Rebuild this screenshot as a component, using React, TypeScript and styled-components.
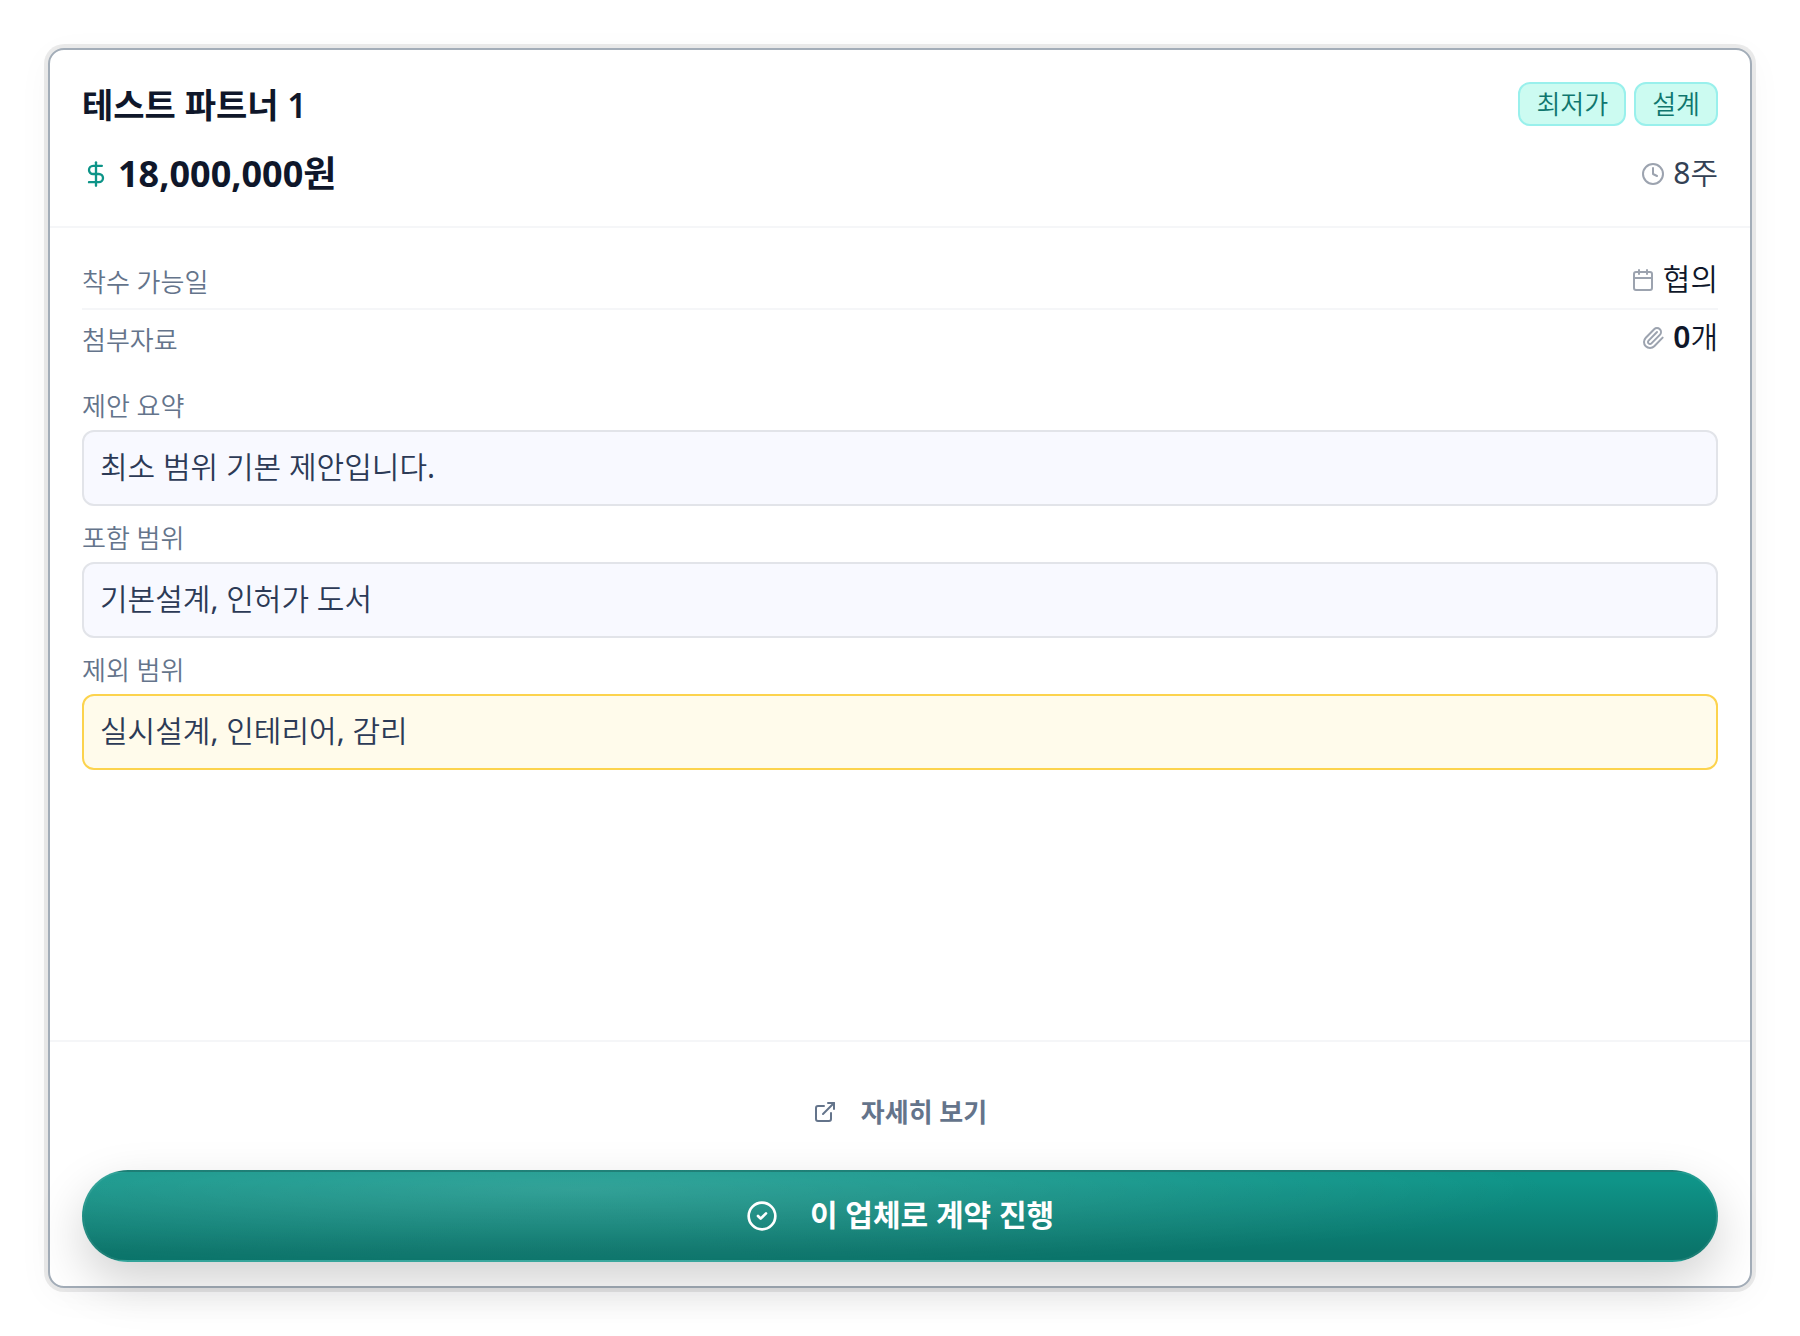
import React from "react";
import styled, { createGlobalStyle } from "styled-components";
import { Calendar, CircleCheck, Clock, DollarSign, ExternalLink, Paperclip } from "lucide-react";

const lightHangul = `"Noto Sans", "Noto Sans CJK KR DemiLight", "Noto Sans CJK KR", sans-serif`;

const GlobalStyle = createGlobalStyle`
  *, *::before, *::after { box-sizing: border-box; }
  body {
    margin: 0;
    background: #ffffff;
    font-family: "Noto Sans", "Noto Sans CJK KR", sans-serif;
    color: #0f172a;
  }
`;

const Page = styled.main`
  display: flex;
  min-height: 100vh;
  padding: 48px;
`;

const Card = styled.article`
  display: flex;
  flex: 1;
  flex-direction: column;
  min-width: 0;
  border: 2px solid #a3adb8;
  border-radius: 16px;
  background: #ffffff;
  box-shadow: 0 0 0 4px rgba(0, 0, 0, 0.08), 0 8px 36px rgba(15, 23, 42, 0.04);
`;

const Header = styled.header`
  display: flex;
  flex-direction: column;
  gap: 24px;
  padding: 32px 32px 28px;
  border-bottom: 2px solid #f5f6f8;
`;

const Line = styled.div`
  display: flex;
  align-items: center;
  justify-content: space-between;
  gap: 16px;
`;

const Title = styled.h2`
  margin: 0;
  padding-top: 2px;
  font-size: 34px;
  font-weight: 600;
  line-height: 42px;
`;

const Badges = styled.div`
  display: flex;
  gap: 8px;
`;

const Badge = styled.span`
  padding: 0 16px;
  border: 2px solid #99f0ec;
  border-radius: 12px;
  background: #ccfbf1;
  color: #0f766e;
  font-size: 26px;
  font-weight: 350;
  line-height: 40px;
`;

const Price = styled.strong`
  display: flex;
  align-items: center;
  gap: 8px;
  font-size: 36px;
  font-weight: 700;
  line-height: 48px;
  svg { color: #0d9488; }
`;

const Text = styled.span`
  padding-bottom: 2px;
`;

const Value = styled.span<{ $muted?: boolean }>`
  display: flex;
  align-items: center;
  gap: 8px;
  height: 48px;
  color: ${(p) => (p.$muted ? "#334155" : "#0f172a")};
  font-family: ${lightHangul};
  font-size: 30px;
  font-weight: 400;
  line-height: 44px;
  svg { color: #9ca3af; }
  b { font-weight: 600; }
`;

const Body = styled.div`
  display: flex;
  flex: 1;
  flex-direction: column;
  gap: 24px;
  padding: 24px 32px;
`;

const Facts = styled.dl`
  margin: 0;
`;

const Fact = styled.div`
  display: flex;
  align-items: flex-end;
  justify-content: space-between;
  padding: 4px 0;
  & + & { border-top: 2px solid #f5f6f8; }
  dd { margin: 0; }
`;

const FactName = styled.dt`
  color: #64748b;
  font-size: 26px;
  font-weight: 350;
  line-height: 44px;
`;

const Sections = styled.div`
  display: flex;
  flex-direction: column;
  gap: 16px;
`;

const Section = styled.section`
  display: flex;
  flex-direction: column;
  gap: 8px;
`;

const SectionName = styled.h3`
  margin: 0;
  color: #64748b;
  font-size: 26px;
  font-weight: 350;
  line-height: 32px;
`;

const Note = styled.p<{ $warning?: boolean }>`
  margin: 0;
  padding: 12px 16px 14px;
  border: 2px solid ${(p) => (p.$warning ? "#fcd34d" : "#e2e4e9")};
  border-radius: 12px;
  background: ${(p) => (p.$warning ? "#fffbeb" : "#f8f9ff")};
  color: #2c3a56;
  font-family: ${lightHangul};
  font-size: 30px;
  font-weight: 400;
  line-height: 46px;
`;

const Footer = styled.footer`
  display: flex;
  flex-direction: column;
  gap: 12px;
  padding: 24px 32px;
  border-top: 2px solid #f5f6f8;
`;

const Button = styled.button`
  display: flex;
  align-items: center;
  justify-content: center;
  height: 92px;
  border: 2px solid transparent;
  border-radius: 46px;
  background: transparent;
  font-family: inherit;
  font-weight: 700;
  cursor: pointer;
`;

const DetailButton = styled(Button)`
  gap: 24px;
  color: #64748b;
  font-size: 26px;
`;

const ContractButton = styled(Button)`
  gap: 32px;
  border-color: rgba(255, 255, 255, 0.08);
  background:
    radial-gradient(60% 90% at 30% 20%, rgba(255, 255, 255, 0.15), rgba(255, 255, 255, 0)),
    linear-gradient(180deg, #0f9488 10%, #0a746a 90%);
  box-shadow: 0 20px 50px rgba(0, 0, 0, 0.18);
  color: #ffffff;
  font-size: 30px;

  ${Text} { padding-bottom: 6px; }
`;

const sections = [
  { name: "제안 요약", text: "최소 범위 기본 제안입니다." },
  { name: "포함 범위", text: "기본설계, 인허가 도서" },
  { name: "제외 범위", text: "실시설계, 인테리어, 감리", warning: true },
];

export default function App() {
  return (
    <Page>
      <GlobalStyle />
      <Card>
        <Header>
          <Line>
            <Title>테스트 파트너 1</Title>
            <Badges>
              <Badge>최저가</Badge>
              <Badge>설계</Badge>
            </Badges>
          </Line>
          <Line>
            <Price>
              <DollarSign size={28} />
              18,000,000원
            </Price>
            <Value $muted>
              <Clock size={24} />
              <Text>8주</Text>
            </Value>
          </Line>
        </Header>
        <Body>
          <Facts>
            <Fact>
              <FactName>착수 가능일</FactName>
              <dd>
                <Value>
                  <Calendar size={24} />
                  <Text>협의</Text>
                </Value>
              </dd>
            </Fact>
            <Fact>
              <FactName>첨부자료</FactName>
              <dd>
                <Value>
                  <Paperclip size={24} />
                  <Text>
                    <b>0</b>개
                  </Text>
                </Value>
              </dd>
            </Fact>
          </Facts>
          <Sections>
            {sections.map((s) => (
              <Section key={s.name}>
                <SectionName>{s.name}</SectionName>
                <Note $warning={s.warning}>{s.text}</Note>
              </Section>
            ))}
          </Sections>
        </Body>
        <Footer>
          <DetailButton type="button">
            <ExternalLink size={24} />
            <Text>자세히 보기</Text>
          </DetailButton>
          <ContractButton type="button">
            <CircleCheck size={32} />
            <Text>이 업체로 계약 진행</Text>
          </ContractButton>
        </Footer>
      </Card>
    </Page>
  );
}
